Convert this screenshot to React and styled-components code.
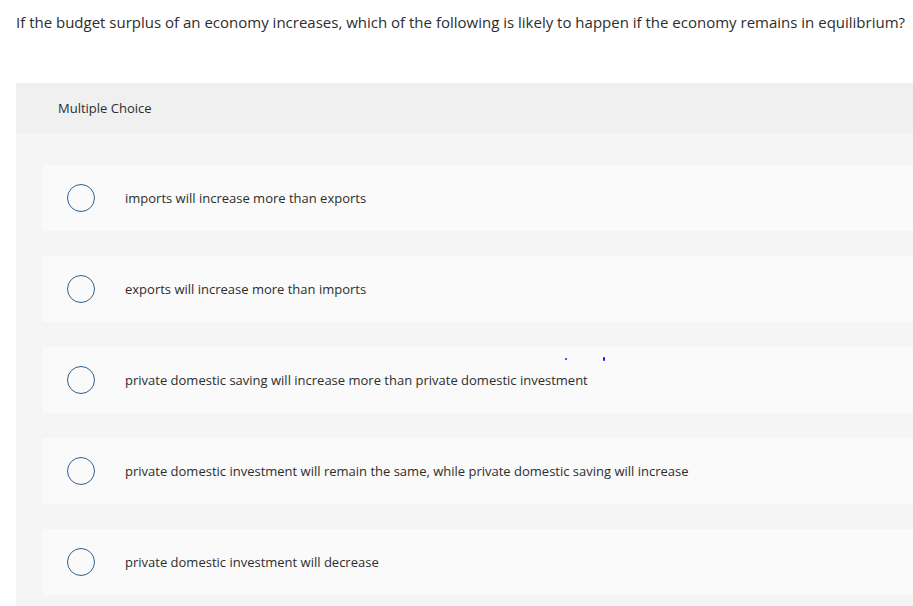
import React from "react";
import styled, { createGlobalStyle } from "styled-components";

const GlobalStyle = createGlobalStyle`
  html, body {
    margin: 0;
    padding: 0;
    background: #ffffff;
    font-family: "Open Sans", Arial, sans-serif;
    color: #2d2d2d;
    overflow: hidden;
  }
`;

const Page = styled.div`
  width: 913px;
  height: 606px;
  overflow: hidden;
`;

const Question = styled.p`
  margin: 0;
  padding: 12px 0 0 16px;
  font-size: 15px;
  line-height: 20px;
  color: #2d2d2d;
  white-space: nowrap;
`;

const Panel = styled.section`
  margin: 51px 0 0 16px;
  background: #f5f5f5;
`;

const PanelHeader = styled.div`
  height: 50px;
  display: flex;
  align-items: center;
  padding-left: 42px;
  background: #f0f0f0;
  font-size: 13px;
  color: #2d2d2d;
`;

const Options = styled.div`
  display: flex;
  flex-direction: column;
  gap: 25px;
  padding: 32px 0 12px 26px;
`;

const Option = styled.label`
  position: relative;
  height: 66px;
  display: flex;
  align-items: center;
  background: #fafafa;
  border-radius: 2px;
  cursor: pointer;
`;

const Radio = styled.span`
  width: 26px;
  height: 26px;
  margin-left: 25px;
  border: 1.5px solid #2f5f8e;
  border-radius: 50%;
  flex: none;
`;

const OptionText = styled.span`
  margin-left: 30px;
  font-size: 13px;
  color: #2d2d2d;
`;

const Mark = styled.span`
  position: absolute;
  top: ${p => p.top}px;
  left: ${p => p.left}px;
  width: ${p => p.w}px;
  height: ${p => p.h}px;
  background: #1a1aff;
  border-radius: 1px;
`;

const choices = [
  "imports will increase more than exports",
  "exports will increase more than imports",
  "private domestic saving will increase more than private domestic investment",
  "private domestic investment will remain the same, while private domestic saving will increase",
  "private domestic investment will decrease",
];

export default function App() {
  return (
    <Page>
      <GlobalStyle />
      <Question>
        If the budget surplus of an economy increases, which of the following is likely to happen if the economy remains in equilibrium?
      </Question>
      <Panel>
        <PanelHeader>Multiple Choice</PanelHeader>
        <Options>
          {choices.map((text, i) => (
            <Option key={i}>
              <Radio />
              <OptionText>{text}</OptionText>
              {i === 2 && (
                <>
                  <Mark top={11} left={523} w={2} h={2} />
                  <Mark top={10} left={561} w={2} h={4} />
                </>
              )}
            </Option>
          ))}
        </Options>
      </Panel>
    </Page>
  );
}
